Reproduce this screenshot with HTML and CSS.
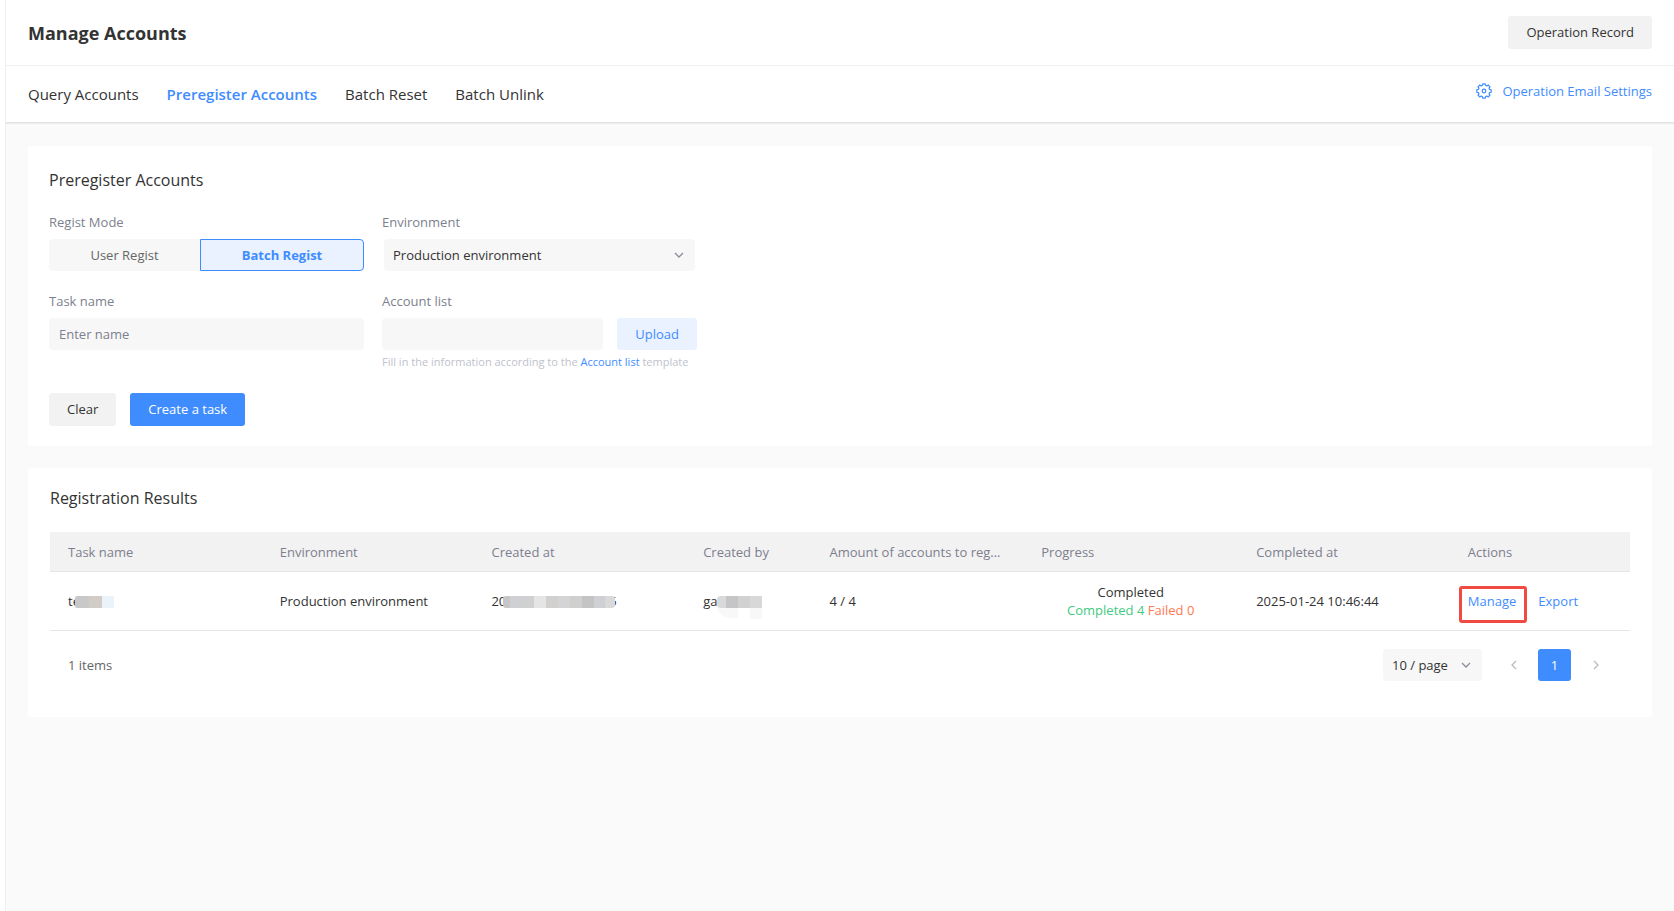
FILE: index.html
```html
<!DOCTYPE html>
<html lang="en">
<head>
<meta charset="utf-8">
<title>Manage Accounts</title>
<link rel="stylesheet" href="styles.css">
</head>
<body>
<div class="app">
  <header class="header">
    <h1 class="header-title">Manage Accounts</h1>
    <button class="btn" type="button">Operation Record</button>
  </header>
  <nav class="nav">
    <div class="tabs">
      <a class="tab" href="#query">Query Accounts</a>
      <a class="tab tab-active" href="#preregister">Preregister Accounts</a>
      <a class="tab" href="#reset">Batch Reset</a>
      <a class="tab" href="#unlink">Batch Unlink</a>
    </div>
    <a class="settings" href="#settings">
      <svg class="gear" viewBox="-8 -8 16 16" width="16" height="16" aria-hidden="true">
        <path d="M-1.27-7.19H1.27L1.6-5.58 2.81-5.07 4.19-5.98 5.98-4.19 5.07-2.81 5.58-1.6 7.19-1.27V1.27L5.58 1.6 5.07 2.81 5.98 4.19 4.19 5.98 2.81 5.07 1.6 5.58 1.27 7.19H-1.27L-1.6 5.58-2.81 5.07-4.19 5.98-5.98 4.19-5.07 2.81-5.58 1.6-7.19 1.27V-1.27L-5.58-1.6-5.07-2.81-5.98-4.19-4.19-5.98-2.81-5.07-1.6-5.58Z"/>
        <circle r="1.8"/>
      </svg>
      <span>Operation Email Settings</span>
    </a>
  </nav>
  <main class="content">
    <section class="card">
      <h2 class="card-title">Preregister Accounts</h2>
      <form class="form">
        <div class="fields">
          <div class="field">
            <span class="label" id="mode-label">Regist Mode</span>
            <div class="segmented" role="group" aria-labelledby="mode-label">
              <button class="segment" type="button">User Regist</button>
              <button class="segment segment-active" type="button">Batch Regist</button>
            </div>
          </div>
          <div class="field">
            <label class="label" for="env">Environment</label>
            <div class="select-wrap env-wrap">
              <select class="control" id="env"><option>Production environment</option></select>
              <svg class="chevron" viewBox="0 0 10 6" width="10" height="6" aria-hidden="true"><path d="M1 1l4 4 4-4"/></svg>
            </div>
          </div>
          <div class="field">
            <label class="label" for="task">Task name</label>
            <input class="control" id="task" type="text" placeholder="Enter name">
          </div>
          <div class="field">
            <label class="label" for="list">Account list</label>
            <div class="upload-row">
              <input class="control" id="list" type="text">
              <button class="btn btn-soft" type="button">Upload</button>
            </div>
            <p class="hint">Fill in the information according to the <a class="link" href="#template">Account list</a> template</p>
          </div>
        </div>
        <div class="form-actions">
          <button class="btn" type="reset">Clear</button>
          <button class="btn btn-primary" type="button">Create a task</button>
        </div>
      </form>
    </section>

    <section class="card card-results">
      <h2 class="card-title">Registration Results</h2>
      <table class="table">
        <colgroup>
          <col class="col-wide"><col class="col-wide"><col class="col-wide"><col class="col-by">
          <col class="col-wide"><col class="col-progress"><col class="col-wide"><col>
        </colgroup>
        <thead>
          <tr>
            <th>Task name</th><th>Environment</th><th>Created at</th><th>Created by</th>
            <th>Amount of accounts to register</th><th>Progress</th><th>Completed at</th><th>Actions</th>
          </tr>
        </thead>
        <tbody>
          <tr>
            <td><div class="masked"><span>te</span><svg class="mask mask-task" width="39" height="12" aria-hidden="true"><rect width="15" height="12" rx="2" fill="#c9c8c9"/><rect x="14" width="13" height="12" fill="#d1ccc8"/><rect x="27" width="12" height="12" rx="1" fill="#ebf3fa"/></svg></div></td>
            <td>Production environment</td>
            <td><div class="masked"><span>20</span><svg class="mask" width="112" height="12" aria-hidden="true"><rect width="9" height="12" rx="3" fill="#c7c5c5"/><rect x="7" width="12" height="12" fill="#cfd0d3"/><rect x="19" width="12" height="12" fill="#d0d0d1"/><rect x="31" width="12" height="12" fill="#e5e5e5"/><rect x="43" width="12" height="12" fill="#d1d0ce"/><rect x="55" width="12" height="12" fill="#d4d4d7"/><rect x="67" width="12" height="12" fill="#d0cfcd"/><rect x="79" width="12" height="12" fill="#c4c4c5"/><rect x="91" width="12" height="12" fill="#cfd0d3"/><rect x="102" width="10" height="12" rx="3" fill="#d9d9da"/></svg><span class="mask-tail">5</span></div></td>
            <td><div class="masked"><span>ga</span><svg class="mask mask-by" width="45" height="23" aria-hidden="true"><path d="M0 12h21v10H12Q3 20 0 12z" fill="#f8f8f8"/><rect x="33" y="12" width="12" height="11" fill="#f8f8f8"/><rect width="12" height="12" rx="4" fill="#d9d9da"/><rect x="9" width="12" height="12" fill="#c5c5c8"/><rect x="21" width="12" height="12" fill="#d1d1d2"/><rect x="33" width="12" height="12" fill="#d8d8d9"/></svg></div></td>
            <td>4 / 4</td>
            <td class="progress">Completed<br><span class="ok">Completed 4</span> <span class="failed">Failed 0</span></td>
            <td>2025-01-24 10:46:44</td>
            <td><div class="row-actions"><a class="link highlighted" href="#manage">Manage</a><a class="link" href="#export">Export</a></div></td>
          </tr>
        </tbody>
      </table>
      <footer class="table-footer">
        <span>1 items</span>
        <div class="pager">
          <div class="select-wrap">
            <select class="control page-size" aria-label="Page size"><option>10 / page</option></select>
            <svg class="chevron" viewBox="0 0 10 6" width="10" height="6" aria-hidden="true"><path d="M1 1l4 4 4-4"/></svg>
          </div>
          <button class="page page-prev" type="button" aria-label="Previous page"><svg class="arrow" viewBox="0 0 6 10" width="6" height="10"><path d="M5 1L1 5l4 4"/></svg></button>
          <button class="page page-active" type="button">1</button>
          <button class="page" type="button" aria-label="Next page"><svg class="arrow" viewBox="0 0 6 10" width="6" height="10"><path d="M1 1l4 4-4 4"/></svg></button>
        </div>
      </footer>
    </section>
  </main>
</div>
</body>
</html>
```

FILE: styles.css
```css
* { box-sizing: border-box; }

body {
  margin: 0;
  background: #fff;
  color: #333;
  font: 13px/18px "Open Sans", "Noto Sans", sans-serif;
}

button, input, select { font: inherit; color: inherit; margin: 0; }

h1, h2, p { margin: 0; }

a { text-decoration: none; color: inherit; }

.app {
  display: flex;
  flex-direction: column;
  min-height: 100vh;
  margin-left: 5px;
  border-left: 1px solid #f0f0f0;
}

.header {
  display: flex;
  align-items: center;
  justify-content: space-between;
  height: 66px;
  padding: 0 22px;
  border-bottom: 1px solid #f0f0f0;
}

.header-title { font-size: 18px; line-height: 24px; font-weight: 700; }

.btn {
  height: 33px;
  padding: 0 18px 1px;
  border: 0;
  border-radius: 3px;
  background: #f2f2f2;
}

.btn-primary { background: #3f8cff; color: #fff; }

.btn-soft { height: 32px; background: #eaf2ff; color: #3f8cff; width: 80px; }

.nav {
  position: relative;
  display: flex;
  align-items: center;
  justify-content: space-between;
  height: 57px;
  padding: 0 22px;
  border-bottom: 1px solid #e2e2e2;
  box-shadow: 0 1px 1px #eee;
}

.tabs { display: flex; gap: 28px; font-size: 15px; line-height: 20px; }

.tab-active { font-weight: 600; color: #3f8cff; }

.settings { display: flex; align-items: center; gap: 10px; padding-bottom: 6px; color: #3f8cff; }

.gear { fill: none; stroke: #3f8cff; stroke-width: 1.2; stroke-linejoin: round; }

.content {
  flex: 1;
  display: flex;
  flex-direction: column;
  gap: 22px;
  padding: 23px 22px;
  background: #fafafa;
}

.card { padding: 22px 21px 20px; border-radius: 4px; background: #fff; }

.card-results { padding: 18px 22px 36px; }

.card-title { font-size: 16px; line-height: 24px; font-weight: 400; }

.form { padding-top: 21px; }

.fields {
  display: grid;
  grid-template-columns: 315px 315px;
  gap: 21px 18px;
}

.field { display: flex; flex-direction: column; }

.label { padding-bottom: 8px; color: #7d7f8e; }

.control {
  display: block;
  width: 100%;
  height: 32px;
  padding: 0 10px;
  border: 0;
  border-radius: 4px;
  background: #f7f7f7;
  appearance: none;
}

select.control { padding-left: 9px; }

.control::placeholder { color: #7d7f8e; opacity: 1; }

.segmented { display: flex; height: 32px; }

.segment {
  width: 151px;
  border: 0;
  border-radius: 4px 0 0 4px;
  background: #f7f7f7;
  color: #666;
}

.segment-active {
  flex: 1;
  border: 1px solid #3f8cff;
  border-radius: 0 4px 4px 0;
  background: #eaf2ff;
  color: #3f8cff;
  font-weight: 700;
}

.select-wrap { position: relative; }

.env-wrap { margin: 0 2px; }

.chevron {
  position: absolute;
  right: 11px;
  top: 13px;
  fill: none;
  stroke: #8b8d9b;
  stroke-width: 1.3;
  pointer-events: none;
}

.upload-row { display: flex; gap: 14px; }

.hint { padding-top: 3px; font-size: 11px; white-space: nowrap; color: #c0c2cc; }

.link { color: #3f8cff; }

.form-actions { display: flex; gap: 14px; padding-top: 22px; }

.table {
  width: 100%;
  margin-top: 22px;
  border-collapse: separate;
  border-spacing: 0;
  table-layout: fixed;
}

.col-wide { width: 13.4%; }
.col-by { width: 8%; }
.col-progress { width: 13.6%; }

.table th, .table td {
  padding: 0 18px;
  border-bottom: 1px solid #e6e6e6;
  text-align: left;
  white-space: nowrap;
}

.table th {
  height: 40px;
  padding-right: 22px;
  overflow: hidden;
  text-overflow: ellipsis;
  background: #f2f2f2;
  color: #7d7f8e;
  font-weight: 400;
}

.table td { height: 59px; }

.table .progress { text-align: center; }

.ok { color: #3fcb80; }
.failed { color: #ff7a52; }

.masked { display: flex; align-items: flex-start; }

.mask { position: relative; flex: none; margin: 4px 0 0 -3px; }

.mask-task { margin-left: -5px; }

.mask-by { margin: 4px 0 -9px; }

.mask-tail { margin-left: -6px; }

.row-actions { display: flex; gap: 22px; }

.highlighted { position: relative; }

.highlighted::after {
  content: "";
  position: absolute;
  inset: -6px -11px -13px -9px;
  border: 3px solid #f04b42;
  border-radius: 3px;
}

.table-footer {
  display: flex;
  align-items: center;
  justify-content: space-between;
  padding: 18px 18px 0;
  color: #666;
}

.pager { display: flex; align-items: center; color: #333; }

.page-size { width: 99px; }

.page {
  width: 33px;
  height: 32px;
  padding: 0;
  border: 0;
  border-radius: 3px;
  background: none;
}

.page-prev { margin: 0 8px 0 15px; }

.page-active { margin-right: 8px; background: #3f8cff; color: #fff; }

.arrow { fill: none; stroke: #bbb; stroke-width: 1.3; }
```
